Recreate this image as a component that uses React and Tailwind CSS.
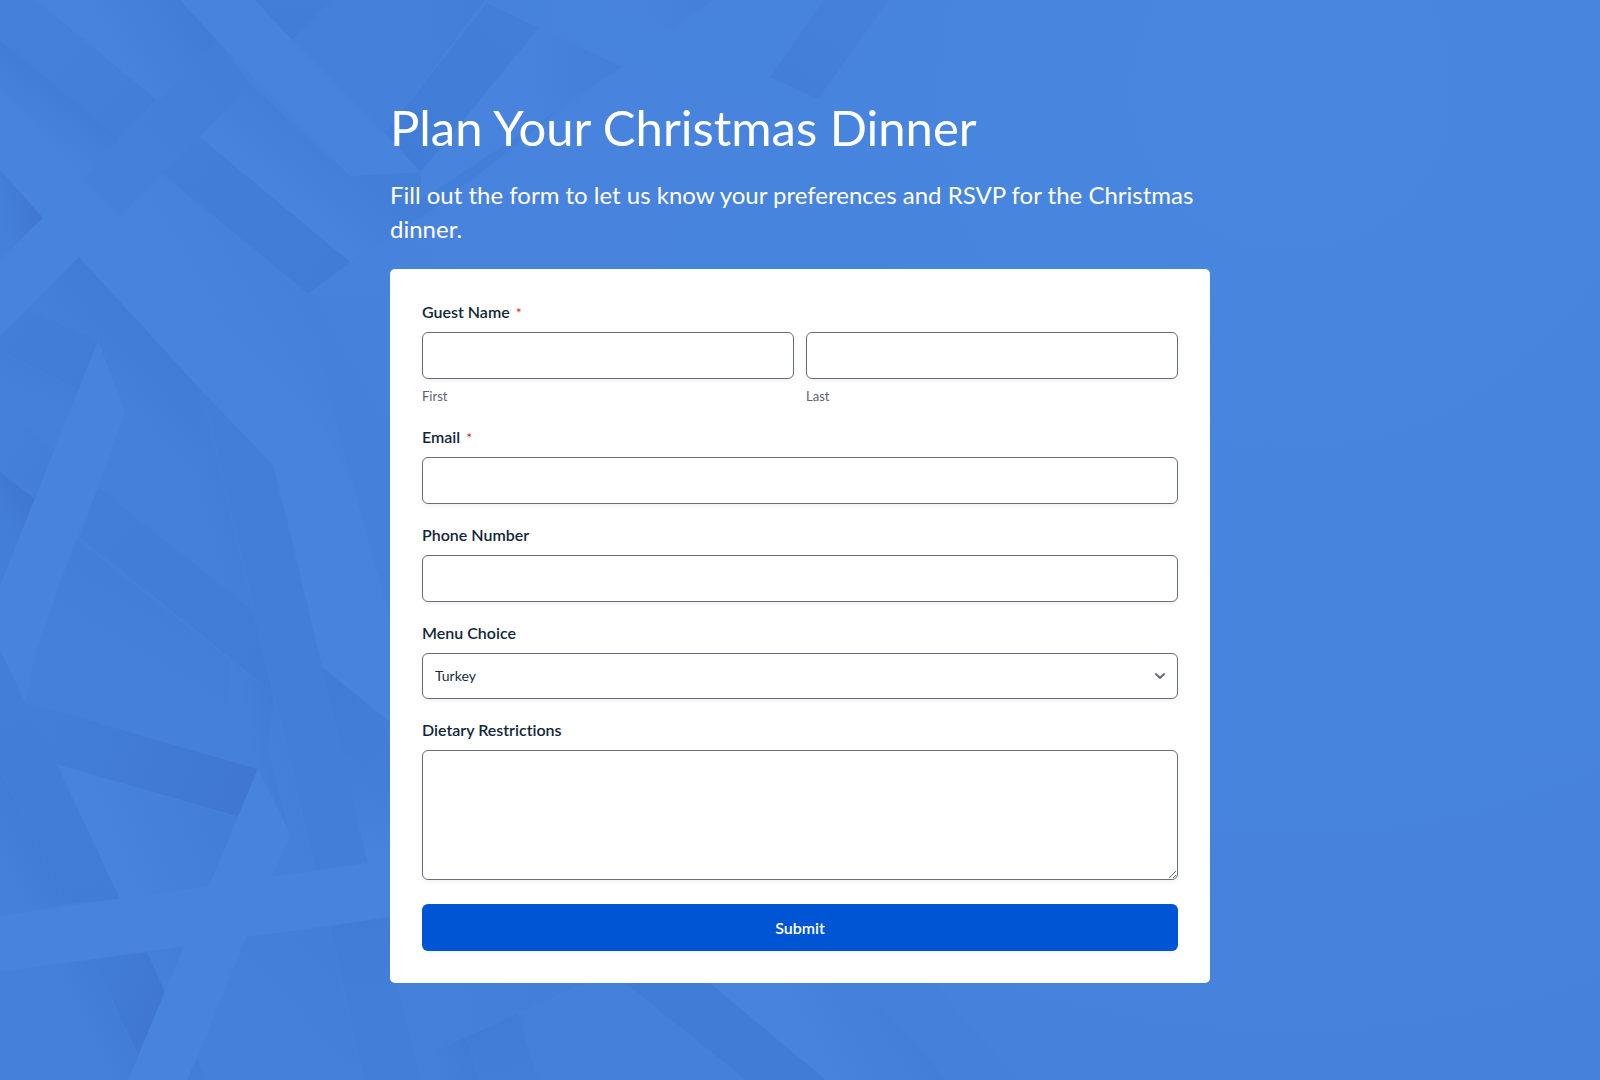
import { ChevronDown } from "lucide-react";

const LIGHT = "#4883de";
const BASE = "#4581db";
const MID = "#437fd9";
const DARK = "#417cd7";
const DEEP = "#3f77d2";

// Each facet: polygon points, gradient start and end points, start and end colours.
const facets = [
  { p: "0,40 120,139 82,179 0,98", g: [86, 105, 50, 151], c: [DARK, LIGHT] },
  { p: "0,0 36,0 157,100 120,139 0,40", g: [20, 20, 130, 130], c: [BASE, MID] },
  { p: "36,0 180,0 218,41 157,100", g: [205, 20, 120, 70], c: [DARK, LIGHT] },
  { p: "0,90 130,217 310,400 390,560 390,722 322,667 292,540 273,465 200,389 79,257 0,170", g: [170, 310, 250, 235], c: [LIGHT, BASE] },
  { p: "120,217 162,174 308,294 390,297 390,560 310,400", g: [190, 330, 300, 260], c: [LIGHT, BASE] },
  { p: "308,294 390,297 390,620 330,400", g: [300, 400, 390, 350], c: [BASE, "#4682dc"] },
  { p: "0,170 43,218 0,260", g: [43, 215, 0, 225], c: [DEEP, BASE] },
  { p: "0,260 43,218 79,257 28,309 0,336", g: [0, 290, 60, 235], c: [LIGHT, LIGHT] },
  { p: "82,179 218,41 250,84 200,137 120,217", g: [90, 190, 230, 60], c: [BASE, MID] },
  { p: "200,137 350,262 308,294 162,174", g: [180, 150, 320, 280], c: [MID, DARK] },
  { p: "250,84 350,176 421,172 560,110 440,205 350,262 200,137", g: [310, 135, 268, 185], c: [MID, LIGHT] },
  { p: "180,0 255,0 292,40 421,172 350,176 218,41", g: [220, 0, 380, 170], c: [LIGHT, LIGHT] },
  { p: "255,0 332,0 292,40", g: [290, 40, 290, 0], c: [DARK, MID] },
  { p: "332,0 485,0 385,133 292,40", g: [480, 10, 400, 20], c: [MID, BASE] },
  { p: "487,3 539,28 421,172 385,133", g: [520, 20, 400, 150], c: [MID, DARK] },
  { p: "539,28 622,67 421,200 421,172", g: [622, 67, 520, 80], c: [MID, LIGHT] },
  { p: "622,67 440,205 308,294 390,297 640,269 760,110", g: [600, 90, 420, 290], c: [LIGHT, "#4782dc"] },
  { p: "612,0 712,0 672,30", g: [700, 0, 630, 0], c: [BASE, LIGHT] },
  { p: "824,0 889,0 818,99 770,77", g: [850, 0, 790, 90], c: [BASE, MID] },

  { p: "28,309 79,257 200,389 237,540 255,612 98,487 125,412 98,341", g: [150, 335, 95, 385], c: [DARK, BASE] },
  { p: "200,389 237,540 255,612 200,570", g: [225, 500, 190, 510], c: [MID, BASE] },
  { p: "28,309 98,341 79,390 0,352 0,336", g: [85, 370, 10, 320], c: [DARK, MID] },
  { p: "0,352 79,390 55,450 0,406", g: [50, 376, 35, 410], c: [MID, BASE] },
  { p: "0,406 55,450 35,499 0,472", g: [50, 460, 0, 430], c: [MID, BASE] },
  { p: "0,472 35,499 0,586", g: [30, 500, 0, 520], c: [DEEP, MID] },
  { p: "98,341 125,412 98,487 60,580 36,660 25,702 0,650 0,586", g: [60, 400, 60, 700], c: [LIGHT, LIGHT] },
  { p: "77,540 273,693 290,834 258,769 25,702 36,650", g: [180, 615, 135, 690], c: [MID, BASE] },
  { p: "230,660 273,693 290,834 258,769 230,761", g: [276, 720, 245, 725], c: [DARK, BASE] },
  { p: "98,487 255,612 273,693 80,538", g: [90, 510, 265, 660], c: [MID, DARK] },
  { p: "200,389 273,465 292,540 322,667 368,863 315,870 273,693 255,612", g: [220, 480, 340, 860], c: [MID, MID] },
  { p: "322,667 390,722 390,790 342,752", g: [330, 700, 390, 770], c: [DARK, MID] },
  { p: "342,752 390,790 390,860 368,863", g: [390, 790, 370, 860], c: [MID, LIGHT] },
  { p: "273,693 315,870 273,876 290,834 268,750", g: [300, 780, 278, 786], c: [MID, BASE] },
  { p: "25,702 258,769 238,817 57,765", g: [240, 800, 40, 720], c: [DEEP, MID] },
  { p: "57,765 238,817 210,885 120,899", g: [200, 800, 100, 840], c: [MID, LIGHT] },
  { p: "0,650 25,702 57,765 120,899 65,904 0,770", g: [20, 680, 90, 900], c: [MID, DARK] },
  { p: "0,770 65,904 0,916", g: [40, 850, 0, 870], c: [DARK, BASE] },
  { p: "0,972 184,947 128,1080 0,1080", g: [150, 1020, 100, 1000], c: [DEEP, DARK] },
  { p: "0,972 93,960 138,1055 128,1080 0,1080", g: [120, 1010, 80, 1030], c: [DARK, BASE] },
  { p: "147,952 184,947 165,992", g: [180, 950, 155, 965], c: [MID, BASE] },
  { p: "0,916 390,860 390,917 0,972", g: [0, 940, 390, 890], c: [LIGHT, LIGHT] },
  { p: "246,937 330,926 363,1080 207,1080 197,1058", g: [330, 940, 240, 1020], c: [MID, BASE] },
  { p: "330,926 390,917 400,983 416,1058 420,1080 363,1080", g: [350, 925, 350, 1000], c: [DARK, MID] },
  { p: "258,769 290,834 246,937 197,1058 187,1080 128,1080", g: [270, 800, 160, 1070], c: [LIGHT, LIGHT] },
  { p: "197,1058 207,1080 187,1080", g: [197, 1058, 197, 1080], c: [DARK, MID] },

  { p: "396,983 587,983 416,1058", g: [400, 1000, 560, 983], c: [BASE, MID] },
  { p: "587,983 625,983 746,1080 538,1080 518,1013", g: [640, 1000, 540, 1060], c: [BASE, BASE] },
  { p: "518,1013 538,1080 480,1080 467,1036", g: [500, 1020, 510, 1080], c: [DARK, MID] },
  { p: "467,1036 480,1080 440,1080 420,1056", g: [470, 1060, 430, 1070], c: [DARK, BASE] },
  { p: "625,983 710,983 826,1080 746,1080", g: [640, 983, 800, 1080], c: [DARK, DARK] },
  { p: "710,983 860,983 947,1080 826,1080", g: [900, 1010, 810, 1060], c: [MID, LIGHT] },
  { p: "860,983 934,983 1018,1080 947,1080", g: [870, 983, 990, 1080], c: [BASE, BASE] },
];

const ridges = [
  "162,174 308,294",
  "202,389 237,540 273,693 315,870",
  "83,540 273,693",
  "57,765 238,817",
  "0,352 79,390",
  "93,960 138,1055",
  "0,770 65,903",
  "330,926 363,1080",
  "467,1036 480,1080",
  "587,983 416,1058",
];

function Backdrop() {
  return (
    <svg
      aria-hidden="true"
      className="absolute inset-0 h-full w-full"
      viewBox="0 0 1600 1080"
      preserveAspectRatio="xMidYMid slice"
    >
      <defs>
        <radialGradient id="glow" gradientUnits="userSpaceOnUse" cx="1292" cy="90" r="1300">
          <stop offset="0" stopColor="#4886df" />
          <stop offset="1" stopColor="#4581da" />
        </radialGradient>
        {facets.map(({ g, c }, i) => (
          <linearGradient key={i} id={`facet-${i}`} gradientUnits="userSpaceOnUse" x1={g[0]} y1={g[1]} x2={g[2]} y2={g[3]}>
            <stop offset="0" stopColor={c[0]} />
            <stop offset="1" stopColor={c[1]} />
          </linearGradient>
        ))}
      </defs>
      <rect width="1600" height="1080" fill="url(#glow)" />
      {facets.map(({ p }, i) => (
        <polygon key={i} points={p} fill={`url(#facet-${i})`} />
      ))}
      {ridges.map((p) => (
        <polyline key={p} points={p} fill="none" stroke="#4a86e0" strokeOpacity="0.5" />
      ))}
    </svg>
  );
}

const control =
  "block w-full rounded-md border border-[#656c7b] bg-white px-3 text-sm text-[#172b40] shadow-[0_2px_4px_rgba(24,24,60,0.06)] outline-none focus:border-[#0055d4]";
const labelText = "mb-[9px] block text-base leading-[22px] font-semibold text-[#12263a]";

function Required() {
  return <span className="ml-1.5 text-sm font-normal text-[#c9301c]">*</span>;
}

function TextField({ id, label, type, required }) {
  return (
    <div>
      <label htmlFor={id} className={labelText}>
        {label}
        {required && <Required />}
      </label>
      <input id={id} type={type} required={required} className={`${control} h-[47px]`} />
    </div>
  );
}

function NamePart({ id, label }) {
  return (
    <div>
      <input id={id} type="text" required className={`${control} h-[47px]`} />
      <label htmlFor={id} className="mt-2 block text-[13px] leading-[19px] text-[#5b6270]">
        {label}
      </label>
    </div>
  );
}

export default function App() {
  return (
    <main className="relative min-h-screen bg-[#4683dc] px-4 py-24 pb-[97px] font-['Lato',sans-serif] [font-variant-ligatures:none]">
      <Backdrop />
      <div className="relative mx-auto w-full max-w-[820px]">
        <h1 className="text-[49px] leading-[62px] text-white">Plan Your Christmas Dinner</h1>
        <p className="mt-5 text-2xl leading-[34px] text-white">
          Fill out the form to let us know your preferences and RSVP for the Christmas dinner.
        </p>
        <form className="mt-[23px] rounded-[5px] bg-white p-8" onSubmit={(e) => e.preventDefault()}>
          <div className="flex flex-col gap-5">
            <fieldset>
              <legend className={labelText}>
                Guest Name
                <Required />
              </legend>
              <div className="grid grid-cols-2 gap-3">
                <NamePart id="first-name" label="First" />
                <NamePart id="last-name" label="Last" />
              </div>
            </fieldset>
            <TextField id="email" label="Email" type="email" required />
            <TextField id="phone" label="Phone Number" type="tel" />
            <div>
              <label htmlFor="menu" className={labelText}>
                Menu Choice
              </label>
              <div className="relative">
                <select id="menu" defaultValue="Turkey" className={`${control} h-[46px] appearance-none`}>
                  <option>Turkey</option>
                </select>
                <ChevronDown
                  aria-hidden="true"
                  strokeWidth={3}
                  className="pointer-events-none absolute inset-y-0 right-2.5 my-auto size-4 text-[#656c7b]"
                />
              </div>
            </div>
            <div>
              <label htmlFor="diet" className={labelText}>
                Dietary Restrictions
              </label>
              <textarea id="diet" className={`${control} h-[130px] resize py-3`} />
            </div>
          </div>
          <button
            type="submit"
            className="mt-6 h-[47px] w-full rounded-md bg-[#0055d4] text-base font-semibold text-white shadow-[0_2px_4px_rgba(24,24,60,0.06)] hover:bg-[#004bbd]"
          >
            Submit
          </button>
        </form>
      </div>
    </main>
  );
}
